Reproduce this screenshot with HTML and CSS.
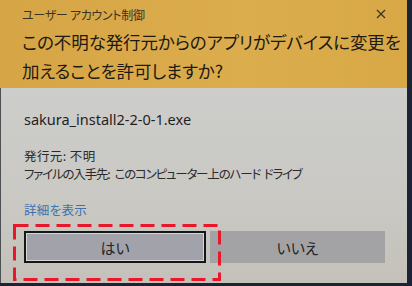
FILE: index.html
```html
<!DOCTYPE html>
<html lang="ja">
<head>
<meta charset="utf-8">
<link rel="stylesheet" href="styles.css">
</head>
<body>
<div class="screen">
  <div class="dialog">
    <div class="header">
      <div class="titlebar">
        <span class="title">ユーザー アカウント制御</span>
        <svg class="close" width="10" height="10" viewBox="0 0 10 10"><path d="M1 1L9 9M9 1L1 9" stroke="#3a3226" stroke-width="1.2" fill="none"/></svg>
      </div>
      <div class="heading">この不明な発行元からのアプリがデバイスに変更を<br>加えることを許可しますか?</div>
    </div>
    <div class="body">
      <div class="filename">sakura_install2-2-0-1.exe</div>
      <div class="meta">
        <div class="meta-line">発行元: 不明</div>
        <div class="meta-line narrow">ファイルの入手先<span class="sep">: </span>このコンピューター上のハード ドライブ</div>
      </div>
      <div class="link">詳細を表示</div>
      <div class="buttons">
        <div class="btn btn-yes"><span>はい</span></div>
        <div class="btn btn-no"><span>いいえ</span></div>
      </div>
    </div>
    <svg class="mark" width="210" height="58" viewBox="0 0 210 58"><rect x="1.5" y="1.5" width="205" height="54" fill="none" stroke="#e8182a" stroke-width="3" stroke-dasharray="14 7"/></svg>
  </div>
</div>
</body>
</html>
```
FILE: styles.css
```css
html, body {
  margin: 0;
  padding: 0;
}
body {
  width: 412px;
  height: 286px;
  background: #1b2434;
  overflow: hidden;
  font-family: "Noto Sans CJK JP", "Noto Sans", sans-serif;
  font-feature-settings: "palt" 1;
}
.screen {
  width: 412px;
  height: 286px;
}
.dialog {
  position: relative;
  width: 407px;
  height: 283px;
  display: flex;
  flex-direction: column;
}
.header {
  height: 88px;
  background: linear-gradient(90deg, #d6a545, #dcad4d 60%, #d8a846);
  box-sizing: border-box;
  padding: 6px 0 0 22px;
}
.titlebar {
  display: flex;
  align-items: center;
  justify-content: space-between;
  height: 16px;
  padding-right: 21px;
}
.title {
  font-size: 12px;
  color: #3b3326;
  letter-spacing: -0.3px;
}
.close {
  display: block;
}
.heading {
  margin-top: 5px;
  font-size: 17.5px;
  line-height: 29px;
  color: #1e1a12;
  letter-spacing: -0.1px;
}
.body {
  flex: 1;
  background: linear-gradient(180deg, #cdcdcb, #c9c8c3 60%, #c3c1b9);
  border-left: 1px solid #4c5052;
  box-sizing: border-box;
  padding: 20px 0 0 23px;
  display: flex;
  flex-direction: column;
}
.filename {
  font-family: "Noto Sans", sans-serif;
  font-size: 14.5px;
  line-height: 22px;
  color: #1f1f1f;
}
.meta {
  margin-top: 17px;
  color: #2a2a2a;
}
.meta-line {
  font-size: 12.5px;
  line-height: 17.5px;
  letter-spacing: 0.4px;
}
.meta-line.narrow {
  letter-spacing: -1.2px;
  word-spacing: 2px;
}
.meta-line .sep {
  letter-spacing: 0.5px;
  word-spacing: 0;
}
.link {
  margin-top: 19px;
  font-size: 12.5px;
  line-height: 17px;
  color: #3f72ad;
  letter-spacing: 0.3px;
}
.buttons {
  margin-top: 13px;
  display: flex;
  gap: 4px;
  width: 361px;
}
.btn {
  height: 32px;
  box-sizing: border-box;
  display: flex;
  align-items: center;
  justify-content: center;
  font-size: 15px;
  color: #262626;
}
.btn-yes {
  width: 182px;
  background: #a2a3aa;
  border: 2px solid #161616;
  box-shadow: inset 0 0 0 1px #d6d6d8;
}
.btn-no {
  flex: 1;
  background: #a3a3a5;
}
.mark {
  position: absolute;
  left: 13px;
  top: 224px;
}
```
